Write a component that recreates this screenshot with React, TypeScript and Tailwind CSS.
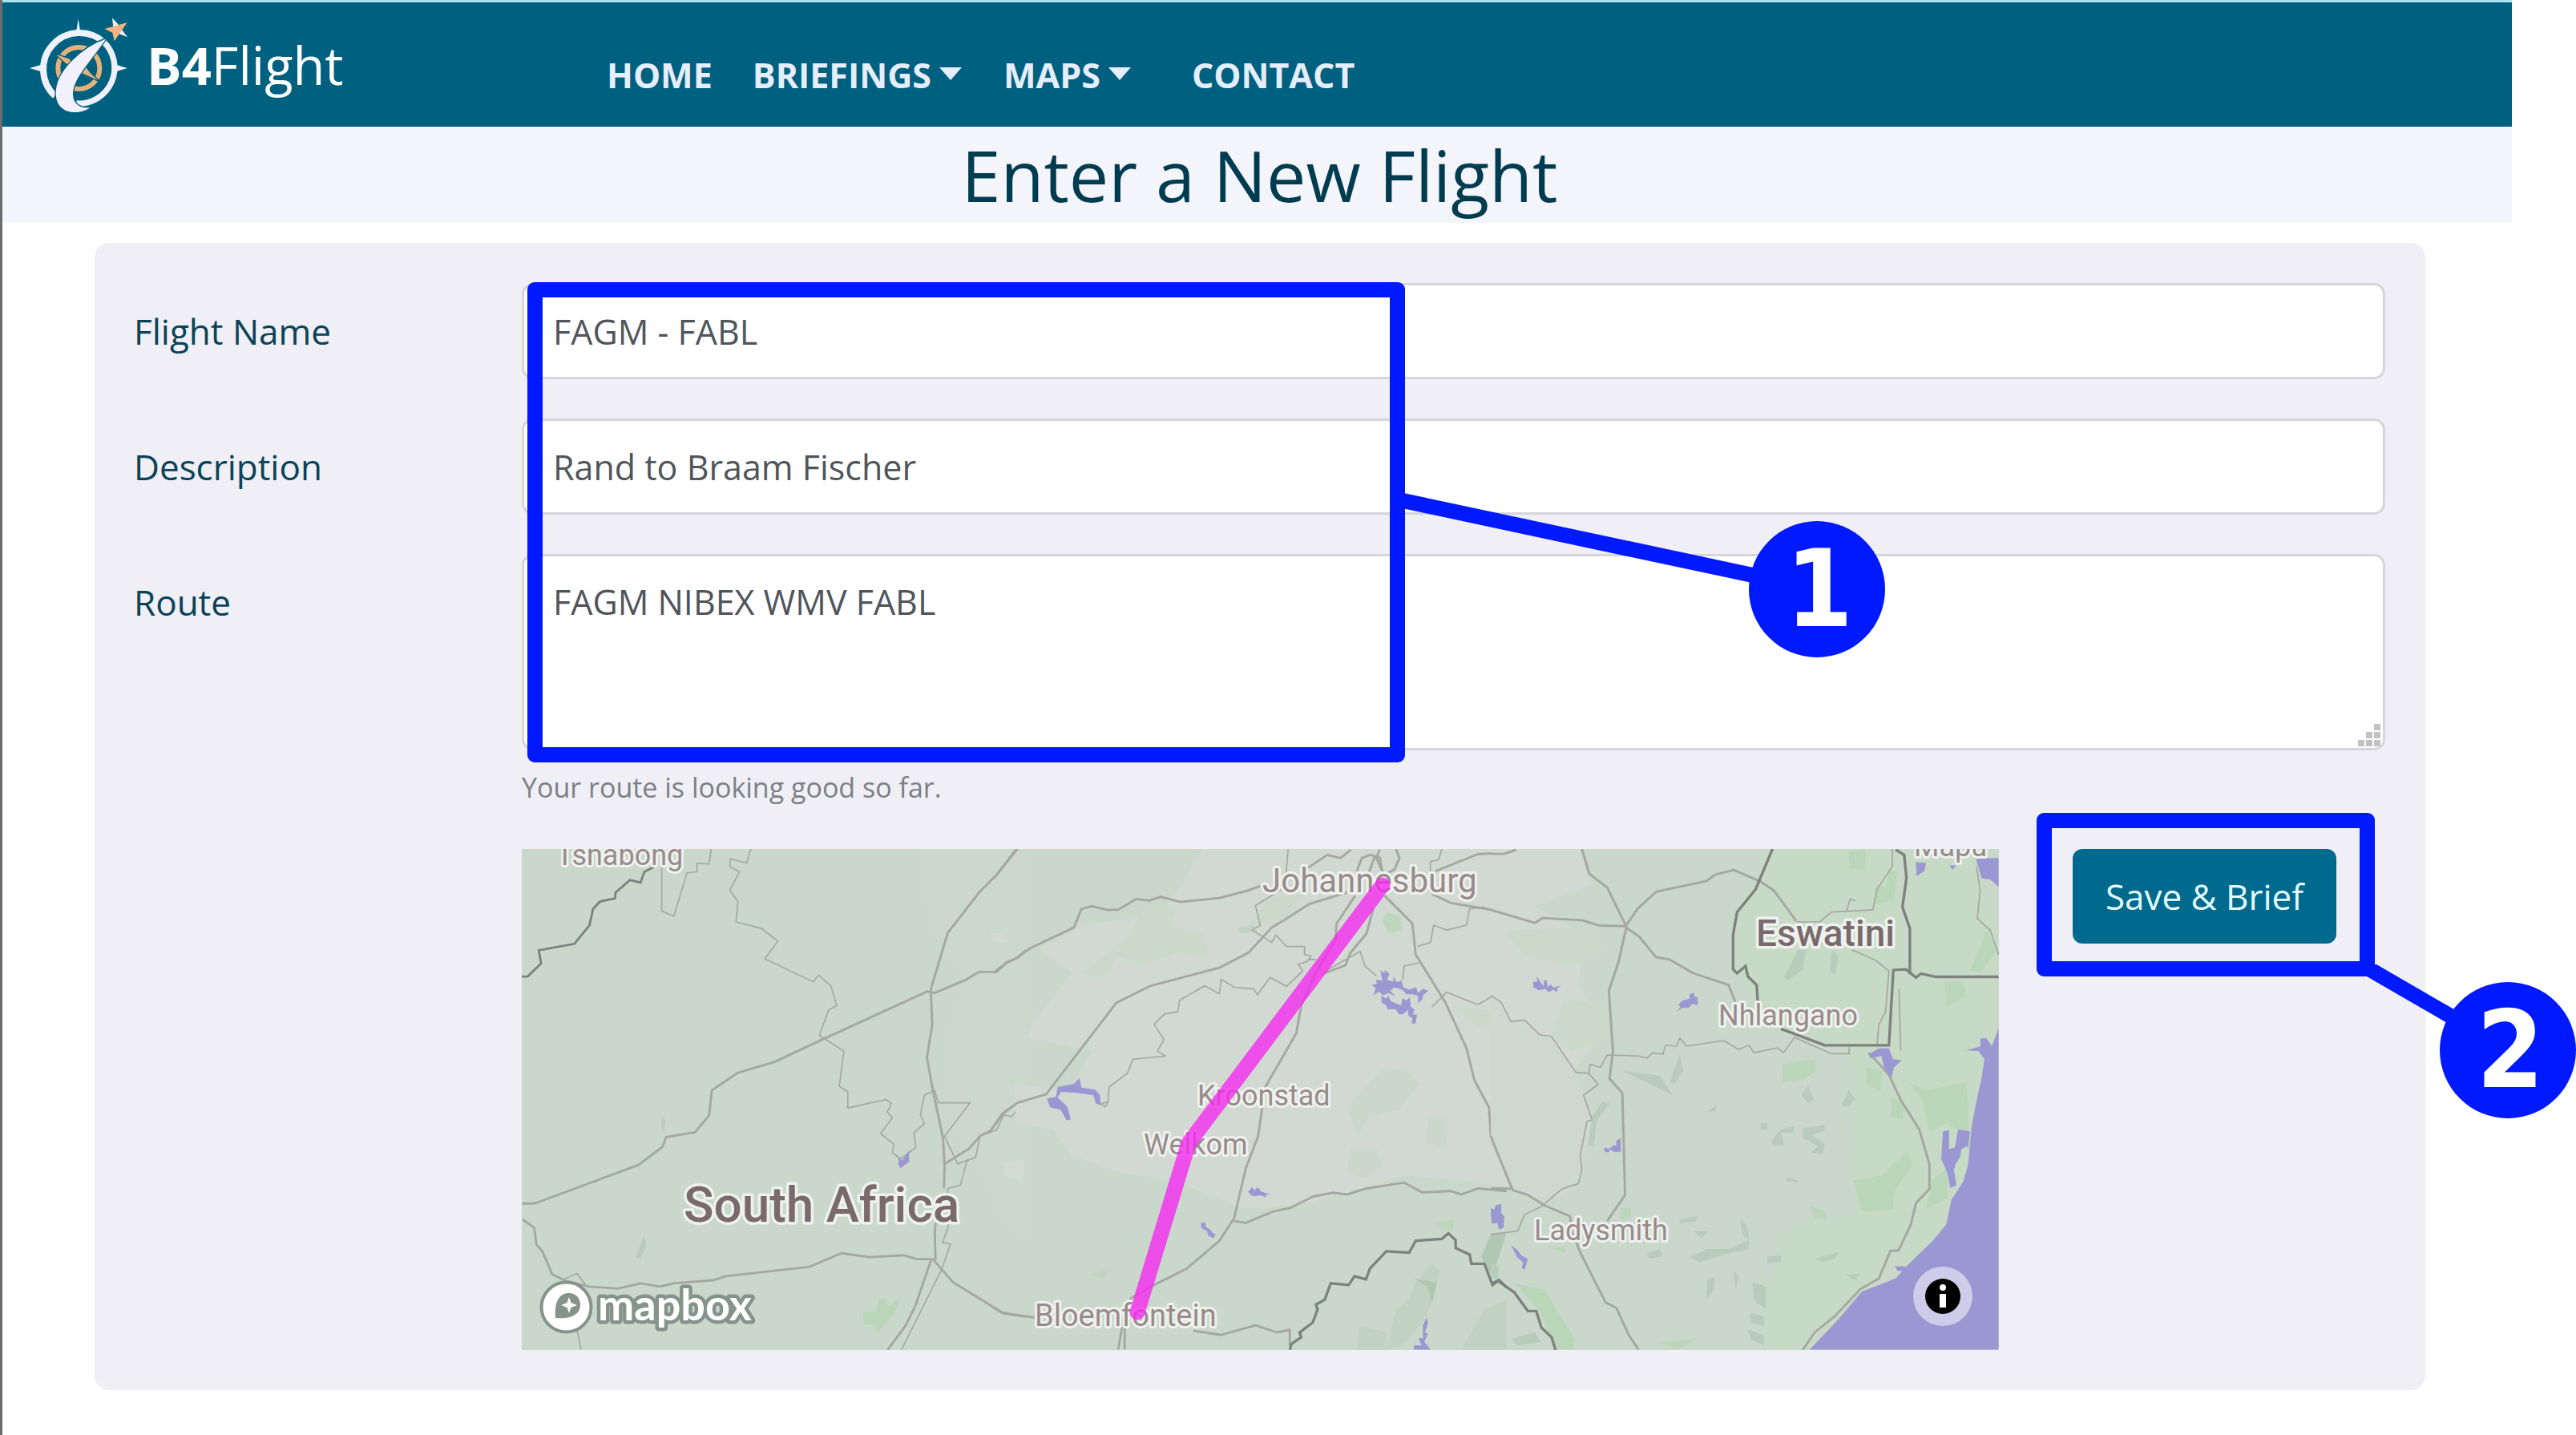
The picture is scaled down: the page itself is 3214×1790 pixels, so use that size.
import type { ReactNode } from "react";

const FONT = 'font-["Open_Sans","Noto_Sans",sans-serif]';

function Logo() {
  return (
    <svg viewBox="111 63 366 354" className="h-[118px] w-[122px]" aria-hidden="true">
      <circle cx="295" cy="252" r="78" fill="none" stroke="#e3b27c" strokeWidth="18" />
      <path d="M202 196 L262 216 L278 250 L246 236 Z" fill="#e3b27c" stroke="#00607f" strokeWidth="4" />
      <path d="M318 240 L338 268 L376 304 L302 270 Z" fill="#e3b27c" stroke="#00607f" strokeWidth="4" />
      <path d="M206 356 A134 134 0 1 1 390 156" fill="none" stroke="#eef1fc" strokeWidth="24" />
      <path d="M386 152 A134 134 0 0 1 286 384" fill="none" stroke="#eef1fc" strokeWidth="22" />
      <path d="M293 68 L300 110 H286 Z M110 252 L152 240 V264 Z M477 252 L436 240 V264 Z" fill="#eef1fc" />
      <path
        d="M402 138 C300 172 204 268 207 350 C209 398 243 422 288 419 C312 417 330 409 344 397 C305 402 277 390 275 352 C273 291 340 232 402 138 Z"
        fill="#f1f0fc"
        stroke="#00607f"
        strokeWidth="4"
      />
      <path d="M420 64 L444 90 L424 100 Z M477 136 L456 108 L442 122 Z" fill="#eef1fc" />
      <path d="M391 105 L424 96 L476 81 L456 110 L428 151 L421 119 Z" fill="#f2b483" />
    </svg>
  );
}

function Caret() {
  return (
    <svg viewBox="0 0 28 16" className="-mt-1 h-4 w-7" aria-hidden="true">
      <path d="M0 0 H28 L14 16 Z" fill="currentColor" />
    </svg>
  );
}

function Header() {
  return (
    <header className="flex h-[158px] items-center border-t-[3px] border-[#a9e3f2] bg-[#00607f] pl-[34px] text-[#e6edfc]">
      <a href="#" className="flex w-[720px] items-center gap-[24px] text-[65px] leading-[80px] text-white">
        <Logo />
        <span>
          <b>B4</b>Flight
        </span>
      </a>
      <nav className="mt-[26px] flex items-center text-[43px] leading-[60px] font-bold">
        <a href="#" className="mr-[50px]">HOME</a>
        <button type="button" className="mr-[52px] flex items-center gap-[10px]">
          BRIEFINGS <Caret />
        </button>
        <button type="button" className="mr-[76px] flex items-center gap-[10px]">
          MAPS <Caret />
        </button>
        <a href="#">CONTACT</a>
      </nav>
    </header>
  );
}

const line = "fill-none stroke-[#a5a7a1] [stroke-linejoin:round]";

function WestMap() {
  return (
    <g transform="translate(-11 -9) scale(0.408)">
      <path d="M1240 20 L1568 20 L1568 1230 L1480 1120 L1420 960 L1340 860 L1320 640 L1380 420 L1280 260 Z" fill="#ccd8cc" />
      <path d="M1460 280 l40 0 l10 30 l-40 -5 Z M1500 980 l60 -10 v70 l-60 -20 Z" fill="#d3dad2" />
      <path d="M1120 1400 L1140 1395 L1150 1420 L1185 1395 L1165 1445 L1115 1500 L1100 1475 L1075 1480 L1070 1440 L1110 1435 Z" fill="#b9d6b9" />
      <path d="M400 1205 L408 1235 L390 1272 L375 1272 Z M455 840 L466 850 L462 890 L454 870 Z" fill="#b9cbbb" />
      <g className={line} strokeWidth="4">
        <path d="M455 75 V212 L492 228 L532 95 L563 92 V66 L600 68 L606 22" />
        <path d="M660 22 M728 22 L715 65 L665 52 L663 76 L693 92 L663 148 L688 182 L682 245 L760 265 L810 304 L770 358 L918 428 L935 408 L972 440 L990 500 L965 515 L937 592 L1012 640 L998 748 L1024 764 V814 L1140 788 L1158 800 L1145 825 L1160 845 L1124 892 L1165 925 L1160 950 L1185 970 L1232 935 L1226 890 L1258 862 L1246 835 L1258 775 L1290 760 L1300 798 H1398 L1320 900 L1360 985 L1415 965 L1428 900 L1480 880 L1500 835 L1525 840 L1568 790" />
        <path d="M1390 970 L1368 1050 L1330 1060 V1180 L1314 1225 L1338 1230 L1310 1310 L1188 1553" />
        <path d="M196 1490 L208 1553 M150 1340 L196 1320 L222 1355" />
      </g>
      <g className={line} strokeWidth="7">
        <path d="M27 1106 H66 L384 988 L458 932 L468 903 L557 888 L600 836 L608 760 L688 706 L800 673 L945 605 L1266 458 L1290 462 L1385 422 L1425 398 H1478 L1510 370 L1540 356 L1568 332" />
        <path d="M1540 22 L1478 102 L1430 150 L1330 278 L1278 450 L1282 560 L1266 660 L1284 760 L1315 905 L1320 990 L1318 1060" />
        <path d="M1320 985 L1395 938 L1430 898 L1460 884 L1498 832 L1540 800 L1568 790" />
        <path d="M1293 1165 L1290 1190 L1292 1278 M30 1155 L65 1180 L72 1232 L90 1252 L120 1322 L160 1342 L232 1360 L320 1366 L390 1350 L450 1360 L490 1350 L615 1340 L650 1328 L905 1300 L1005 1258 L1090 1270 L1195 1264 L1235 1276 L1284 1276 L1345 1346 L1500 1442 L1568 1452" />
        <path d="M1278 1280 L1230 1420 L1200 1480 L1146 1553" />
      </g>
      <path d="M27 412 H45 L86 372 L79 332 L188 312 L234 255 L245 205 L266 183 L312 173 L314 155 L358 117 L390 125 L402 92 L430 78" className="fill-none stroke-[#7d827c]" strokeWidth="7" />
      <path d="M1180 965 L1190 975 L1210 945 L1212 978 L1185 998 L1178 985 Z" fill="#9a97d2" />
    </g>
  );
}

function CentralMap() {
  return (
    <g transform="translate(589 -9) scale(0.408)">
      <path d="M170 310 L260 260 L520 215 L640 20 H1600 V1060 L1480 1040 L1250 1020 L1130 1060 L930 1110 L760 1120 L560 1040 L380 1010 L240 960 L180 880 L70 860 L60 740 L230 760 L300 640 L100 600 L130 540 L240 400 L140 330 Z" fill="#d2d9d2" />
      <path d="M470 190 L560 200 L540 260 L640 280 L660 350 L560 340 L450 380 L380 350 L330 420 L270 400 L400 300 Z M780 260 L840 175 L960 150 L900 230 Z M1400 500 L1568 520 V590 L1480 570 Z" fill="#cbd9cb" />
      <path d="M1080 810 L1130 760 L1180 700 L1260 690 L1300 740 L1240 820 L1150 840 L1110 900 Z M1090 940 h80 l20 50 l-50 40 l-60 -20 Z M1330 840 h60 l-10 100 l-60 -20 Z" fill="#ccd7cc" />
      <path d="M1200 215 L1245 230 L1248 270 L1210 280 L1188 245 Z M1352 1165 L1405 1155 V1185 L1370 1190 Z" fill="#bdd6bc" />
      <path d="M745 265 l50 -10 l10 20 l-50 5 Z M295 1325 l65 -22 l-25 32 Z" fill="#bfd3c0" />
      <path d="M1290 1345 L1340 1290 L1365 1310 L1345 1400 L1310 1470 L1250 1540 L1200 1553 L1230 1430 L1270 1400 Z M1500 1430 L1568 1400 V1553 H1430 Z M1120 1480 L1200 1500 V1553 H1110 Z" fill="#c1d2c1" />
      <path d="M1285 1335 L1355 1348 L1340 1410 L1325 1360 Z M1520 1200 L1568 1195 L1525 1330 L1490 1270 Z" fill="#b0c8b2" />
      <g className={line} strokeWidth="4">
        <path d="M330 800 L350 795 L340 810 L325 800 M350 795 L352 750 L408 708 L425 665 L525 655 L500 640 L520 605 L490 558 L522 526 L562 520 L568 485 L645 440 L690 465 L695 420 L735 445 L795 450 L806 468 L845 415 L895 442 L945 395 L930 375 L960 365 L970 350 L950 345 V320 H895 L862 285 L850 308 L790 270 L815 255 L800 195 L890 140 L900 22" />
        <path d="M960 360 L985 360 M1015 395 L1120 335 L1135 380 L1170 410 M1250 420 L1255 380 L1300 370 M1295 320 L1335 308 L1345 255 L1385 270 L1445 255 L1455 205 L1500 200 M1340 505 L1385 460 L1480 498 L1520 475 L1560 490 L1568 520" />
        <path d="M1370 22 L1360 55 L1335 60 V90" />
      </g>
      <g className={line} strokeWidth="7">
        <path d="M72 22 L0 112 M0 400 L40 368 L70 356 L110 326 L245 262 L268 205 L300 197 L345 208 H380 L435 175 L475 180 L510 168 L570 184 L690 172 L775 150 L815 135 M960 80 L1020 40 L1060 50 L1092 24" />
        <path d="M0 870 L25 832 L72 798 L160 772 L375 492 L480 440 L690 385 L780 338 L850 262 L900 232 L965 190 L1080 155" />
        <path d="M1350 90 L1480 38 L1568 32 M1340 160 L1400 188 L1568 215" />
        <path d="M1105 165 L1048 250 L1045 300 L985 400 L940 500 L925 585 L830 750 L808 900 L770 1000 L735 1150 L690 1220 L590 1305 L480 1360 L420 1395 L400 1440 L380 1553 M400 1480 V1553" />
        <path d="M1160 205 L1140 280 L1090 340 L1075 378 L1010 402 M1110 90 L1125 50 L1150 40 L1180 48 L1190 100 M1165 45 L1145 100 M1180 24 L1170 50 L1185 85 M1230 22 L1240 50 L1225 85 L1205 95" />
        <path d="M1195 165 L1280 250 L1290 345 L1380 490 L1445 630 L1470 730 L1514 812 L1520 900 L1568 1025" />
        <path d="M735 1160 L770 1165 L855 1130 L905 1120 L975 1085 L1035 1073 L1080 1078 L1140 1060 L1255 1042 L1310 1072 L1395 1068 L1430 1078 L1480 1060 L1568 1068" />
        <path d="M0 1425 L25 1440 L130 1455 M610 1495 L695 1508 L800 1478 L865 1500 L905 1492 V1540" />
      </g>
      <path d="M905 1553 L910 1535 L940 1515 L935 1500 L975 1470 L990 1430 L985 1415 L1012 1400 L1030 1350 L1085 1355 L1103 1328 L1138 1338 L1150 1305 L1200 1252 L1270 1256 L1290 1220 L1370 1214 L1390 1197 L1412 1218 V1242 L1455 1262 L1460 1290 L1500 1290 L1525 1355 L1545 1340 L1568 1362" className="fill-none stroke-[#7d827c]" strokeWidth="8" />
      <g fill="#9a97d2">
        <path d="M162 785 L190 780 L195 750 L245 740 L262 722 L268 752 L310 758 L325 775 L326 805 L312 800 L305 775 L255 768 L205 765 L195 782 L225 810 L235 850 L222 852 L205 820 L172 812 Z" />
        <path d="M1182 392 L1194 402 L1196 392 L1210 405 L1202 422 L1222 428 L1222 412 L1232 430 L1246 424 L1252 445 L1270 452 L1292 445 L1296 462 L1312 450 L1328 455 L1312 470 L1310 482 L1296 494 L1298 472 L1282 466 L1262 466 L1248 452 L1225 445 L1212 455 L1228 472 L1205 462 L1190 470 L1178 458 L1160 470 L1168 448 L1156 438 L1172 434 L1168 422 L1188 424 Z" />
        <path d="M1185 470 L1200 480 L1206 470 L1214 488 L1245 500 L1250 478 L1262 485 L1272 475 L1275 505 L1286 512 L1282 528 L1294 528 L1290 555 L1278 556 L1280 540 L1268 532 L1266 514 L1250 528 L1236 526 L1230 512 L1204 512 L1200 500 L1186 492 Z" />
        <path d="M778 1070 L790 1056 L798 1066 L806 1056 L818 1070 L845 1078 L830 1080 L832 1088 L815 1080 L800 1084 L785 1080 Z M632 1165 L648 1165 L648 1178 L660 1185 L668 1195 L678 1200 L672 1212 L655 1204 L652 1190 L636 1182 Z" />
        <path d="M1520 1120 L1532 1125 L1534 1112 L1552 1108 L1552 1135 L1560 1145 L1554 1160 L1558 1180 L1545 1185 L1540 1165 L1524 1168 L1528 1145 Z" />
        <path d="M1332 1432 L1322 1455 L1328 1470 L1318 1500 L1328 1505 L1316 1528 L1335 1553 H1285 L1284 1540 L1308 1540 L1298 1518 L1312 1518 L1312 1480 Z" />
      </g>
    </g>
  );
}

function EastMap() {
  return (
    <g transform="translate(1209 -9) scale(0.421 0.408)">
      <path d="M0 20 H260 L300 130 L130 200 L280 280 L260 440 L340 560 L250 700 L300 850 L260 1040 L150 1090 L0 1050 Z" fill="#d2d9d2" />
      <path d="M40 270 L320 260 L330 330 L240 380 L100 350 Z M220 480 L350 500 V600 L240 640 L180 590 Z" fill="#cbd9cb" />
      <path d="M0 470 L60 550 L180 600 L250 700 L300 850 L260 1040 L200 1090 L60 1060 L0 920 Z" fill="#cfd8ce" />
      <path d="M400 650 H860 L1060 900 L1060 1130 L700 1100 L400 1060 Z" fill="#ccd7cc" />
      <g fill="#c7dac6">
        <path d="M840 22 H1200 L1230 400 L1190 620 L1120 640 L1200 800 L1290 950 L1300 1060 L1240 1190 L1150 1330 L940 1553 H810 V1400 L880 1180 L1080 1140 L1060 640 L860 560 L720 400 L740 200 Z" />
        <path d="M1230 30 H1440 L1505 300 V420 H1250 Z M1200 420 H1505 V580 L1460 700 L1420 900 L1400 1040 L1340 1190 L1200 1330 L1290 1060 L1180 720 Z" />
      </g>
      <g fill="#b9d6b9">
        <path d="M1060 30 L1110 22 V90 L1065 80 Z M1180 90 H1205 L1195 180 L1140 190 V130 L1170 140 Z M1470 270 L1500 330 L1450 400 L1420 395 Z M1345 430 L1400 425 L1410 470 L1350 505 Z" />
        <path d="M865 680 L960 665 L965 700 L930 725 L865 735 Z M1110 690 L1160 700 L1155 765 L1115 740 Z M1240 735 L1290 760 L1410 735 L1420 900 L1350 860 L1300 890 L1280 790 Z M1190 780 L1225 800 L1220 850 L1185 840 Z" />
        <path d="M1075 1035 L1160 1020 L1235 945 L1250 990 L1200 1060 L1190 1125 L1100 1130 Z M1310 1030 L1350 1000 L1355 1090 L1290 1120 Z M945 1110 L990 1130 L995 1155 L960 1150 Z M385 1120 H415 V1145 L385 1155 Z" />
        <path d="M70 1350 L160 1370 L200 1440 L250 1520 L240 1553 H190 L150 1440 Z M500 1530 L610 1520 L560 1550 Z M170 1240 H220 V1258 Z" />
      </g>
      <g fill="#b9cbbb">
        <path d="M910 330 H935 L925 390 L880 425 L870 415 Z M1010 330 L1030 350 L1022 405 L1005 400 Z M560 650 L570 700 L545 740 L530 735 Z M390 700 L500 715 L540 775 L470 740 Z" />
        <path d="M330 795 L352 800 L315 850 L305 930 L288 930 L300 840 Z M940 745 L958 790 L940 800 L920 775 Z M1060 760 L1080 785 L1060 810 L1040 805 Z M640 825 L670 805 L665 825 Z" />
        <path d="M830 915 L860 880 L900 870 L895 890 L860 890 L870 925 L840 930 Z M925 875 L990 865 V885 L950 895 L990 925 L985 955 L950 950 L970 930 L925 905 Z M875 1025 L910 1035 V1040 H875 Z M800 860 h20 v20 h-20 Z" />
        <path d="M590 1270 L640 1245 L710 1245 L765 1215 V1245 L690 1262 L620 1285 Z M740 1150 L760 1175 L765 1215 L745 1200 Z M460 1260 L500 1245 L510 1268 L470 1275 Z M600 1190 h45 l-20 22 Z M560 1155 l50 -10 v15 l-50 8 Z" />
        <path d="M820 1268 L860 1265 V1285 L820 1290 Z M960 1275 L1030 1255 L1020 1275 L985 1285 Z M775 1345 L815 1360 V1430 L780 1400 Z M720 1310 L735 1330 L725 1370 Z M1050 1325 L1095 1320 L1080 1340 Z M640 1340 L665 1330 L660 1370 L640 1400 Z" />
        <path d="M0 1290 L25 1300 L20 1340 L0 1330 Z M60 1520 L130 1500 L150 1530 L80 1540 Z M770 1440 l40 10 v30 l-40 -10 Z M760 1490 l50 20 v30 l-40 -20 Z" />
      </g>
      <g className={line} strokeWidth="4">
        <path d="M0 470 L30 490 L60 550 L100 545 L145 590 L180 595 L252 705 L290 708 L295 680 L325 690 L345 652 L440 655 L462 662 L480 645 L510 650 L518 622 L550 625 L560 600 L580 625 L690 608 L735 635 L765 622 L780 645 L850 630 L868 645 L900 598 L1010 648 H1062 V628" />
        <path d="M290 708 L318 742 L275 775 L300 850 L285 855 L265 960 L270 1000 L260 1045 L210 1062 L150 1115 L100 1140 L80 1190 L0 1200" />
        <path d="M1190 22 V75 L1145 145 L1132 208 L1010 215 L975 245 H905 M1055 210 L1065 175 L1080 180 M1070 330 L1140 362 L1180 395 L1170 520 L1150 560 L1145 620 M1440 75 L1450 150 L1442 235 L1480 270 L1505 345 M1210 450 L1215 640" />
      </g>
      <g className={line} strokeWidth="7">
        <path d="M0 37 H40 L75 24 M270 22 L292 98 L345 140 L402 260 L378 370 L350 455 L362 640 L352 725 L390 768 L398 1080 L345 1160" />
        <path d="M0 208 L130 248 L155 233 L270 240 L320 256 L400 258 L435 205 L490 153 L640 120 L665 100 L720 86 L800 122 L840 150 L905 242 M400 262 L440 290 L490 353 L530 360 L600 402 L705 438 L725 490" />
        <path d="M0 900 L25 965 L65 1065 L110 1080 L160 1112 L235 1145 L240 1190 L265 1255 L340 1408 L372 1425 L410 1510 L438 1553 M0 1060 H65" />
        <path d="M1120 645 L1180 712 L1215 790 L1270 880 L1300 985 V1062 L1260 1105 L1245 1170 L1208 1250 H1185 L1150 1335 L1095 1368 L1020 1450 L960 1500 L925 1553" />
      </g>
      <g className="fill-none stroke-[#7d827c]" strokeWidth="8">
        <path d="M835 22 L785 145 L730 215 L718 285 V390 L730 402 L755 380 L762 412 L788 438 L792 500 M860 572 L990 622 H1180 L1193 392 L1230 390 L1260 415 L1275 403 L1320 413 H1505" />
        <path d="M1200 24 L1225 40 L1232 110 L1220 200 L1242 265 V405 M0 1352 L20 1342 L70 1378 L110 1435 H135 L150 1485 L180 1515 L192 1553" />
      </g>
      <g fill="#9a97d2">
        <path d="M1505 570 L1485 625 L1468 600 L1450 602 L1452 625 L1408 638 L1445 640 L1463 665 L1455 720 L1440 790 L1425 870 L1415 985 L1400 1040 L1365 1095 L1350 1170 L1310 1220 L1225 1305 L1200 1335 L1100 1375 L1030 1460 L945 1553 H1505 Z" />
        <path d="M1437 50 H1505 V138 L1480 115 L1455 112 Z M1260 62 L1290 65 L1285 90 L1262 105 Z M1360 72 h20 l-12 14 Z M1198 1298 L1230 1298 V1312 H1205 Z" />
        <path d="M1120 650 L1150 632 H1180 L1192 665 L1218 668 L1195 690 L1188 720 L1165 690 L1158 655 L1125 662 Z" />
        <path d="M1340 885 L1358 882 V940 L1375 935 L1385 880 L1420 885 L1415 935 L1395 940 L1390 980 L1372 1000 L1380 1050 L1362 1058 L1352 1010 L1335 970 Z" />
        <path d="M126 428 L138 428 L136 412 L146 428 L156 442 L158 424 L166 424 L168 444 L178 436 L186 446 L208 440 L196 450 L198 460 L184 452 L172 460 L162 450 L142 454 L126 444 Z M550 522 L562 505 L556 498 L568 485 L590 480 L588 466 L602 462 L604 474 L613 475 V500 L598 496 L585 508 L566 508 Z" />
        <path d="M335 936 L352 938 L365 928 L372 930 L372 914 L385 906 V948 L366 948 L352 940 L350 950 L338 948 Z M0 1120 L12 1125 L14 1112 L30 1108 L30 1135 L40 1145 L38 1180 L24 1185 L20 1165 L2 1165 Z M60 1233 L80 1250 L92 1266 L110 1275 L100 1308 L92 1304 L96 1286 L78 1270 Z" />
      </g>
      <path d="M1413 930 L1410 990 L1395 1030 L1378 1020 L1375 990 L1392 960 L1395 940 Z" fill="#c6dcc4" />
    </g>
  );
}

function RouteMap() {
  const halo = "stroke-[#eef2ee] [paint-order:stroke] [stroke-linejoin:round]";
  return (
    <svg
      viewBox="0 0 1843 625"
      preserveAspectRatio="xMidYMid slice"
      className="block h-[625px] w-full bg-[#c9d8ca] font-[Roboto,sans-serif]"
      role="img"
      aria-label="Route map"
    >
      <WestMap />
      <CentralMap />
      <EastMap />
      <g className={halo} strokeWidth="6" fill="#998b8b">
        <g fontSize="36">
          <text x="43" y="20">Tshabong</text>
          <text x="843" y="320">Kroonstad</text>
          <text x="776" y="381">Welkom</text>
          <text x="1493" y="220">Nhlangano</text>
          <text x="1263" y="488">Ladysmith</text>
          <text x="1737" y="9">Mapu</text>
        </g>
        <text x="924" y="54" fontSize="42">Johannesburg</text>
        <text x="640" y="595" fontSize="38">Bloemfontein</text>
      </g>
      <g className={halo} strokeWidth="7" fill="#7b6a6c" fontWeight="500">
        <text x="202" y="465" fontSize="62">South Africa</text>
        <text x="1540" y="121" fontSize="46">Eswatini</text>
      </g>
      <path d="M1074 45 L832 367 L768 578" fill="none" stroke="#f52bef" strokeOpacity="0.8" strokeWidth="19" strokeLinecap="round" strokeLinejoin="round" />
      <circle cx="55.500" cy="571.500" r="31" fill="#fff" stroke="#84948a" strokeWidth="4" />
      <path d="M42 585 C40 560 50 554 59 554 C68 554 73 561 73 569 C73 580 62 587 42 585 Z" fill="#84948a" />
      <path d="M59 559 L61.500 566 L69 569 L61.500 572 L59 579 L56.500 572 L49 569 L56.500 566 Z" fill="#fff" />
      <text x="95" y="588" fontSize="54" fontWeight="700" fill="#fff" className="font-[Lato,sans-serif] stroke-[#84948a] [paint-order:stroke] [stroke-linejoin:round]" strokeWidth="9">
        mapbox
      </text>
    </svg>
  );
}

function ResizeGrip() {
  return (
    <svg viewBox="0 0 28 28" className="pointer-events-none absolute right-[6px] bottom-[5px] h-[28px] w-[28px]" aria-hidden="true">
      <path d="M20 0h8v8h-8Z M10 10h8v8h-8Z M20 10h8v8h-8Z M0 20h8v8h-8Z M10 20h8v8h-8Z M20 20h8v8h-8Z" fill="#c2c2c2" />
    </svg>
  );
}

function Row({ id, label, children }: { id: string; label: string; children: ReactNode }) {
  return (
    <div className="flex items-start">
      <label htmlFor={id} className="w-[484px] shrink-0 text-[44px] leading-[120px] text-[#0a4257]">
        {label}
      </label>
      <div className="relative min-w-0 flex-1">{children}</div>
    </div>
  );
}

const field =
  "block w-full rounded-[14px] border-[3px] border-[#d5d5db] bg-white px-[36px] text-[43px] text-[#50555b] outline-none";

function Badge({ n, className }: { n: number; className: string }) {
  return (
    <div
      className={`absolute flex h-[170px] w-[170px] items-center justify-center rounded-full bg-[#0019ff] pl-[6px] font-["DejaVu_Sans_Condensed","DejaVu_Sans",sans-serif] text-[134px] leading-[170px] font-bold text-white ${className}`}
    >
      {n}
    </div>
  );
}

export default function App() {
  return (
    <div className={`min-h-screen overflow-x-hidden border-l-[3px] border-[#6c6c6c] bg-white ${FONT}`}>
      <div className="mr-[80px]">
        <Header />
        <h1 className="bg-[#f4f4fb] pl-[6px] text-center text-[88px] leading-[120px] text-[#003c50]">Enter a New Flight</h1>
        <form className="mt-[25px] mr-[108px] ml-[115px] rounded-[18px] bg-[#f0eff6] p-[50px] pl-[49px]">
          <div className="relative flex flex-col gap-[49px]">
            <Row id="name" label="Flight Name">
              <input id="name" defaultValue="FAGM - FABL" className={`${field} h-[120px]`} />
            </Row>
            <Row id="description" label="Description">
              <input id="description" defaultValue="Rand to Braam Fischer" className={`${field} h-[120px]`} />
            </Row>
            <Row id="route" label="Route">
              <textarea id="route" defaultValue="FAGM NIBEX WMV FABL" className={`${field} h-[245px] resize-none py-[27px] leading-[60px]`} />
              <ResizeGrip />
            </Row>
            <div className="pointer-events-none absolute top-[-1px] left-[491px] h-[599px] w-[1095px] rounded-[9px] border-[19px] border-[#0019ff]">
              <svg viewBox="0 0 460 120" className="absolute top-[253px] left-[1062px] h-[120px] w-[460px] overflow-visible" aria-hidden="true">
                <path d="M9 0 L455 95" stroke="#0019ff" strokeWidth="19" />
              </svg>
              <Badge n={1} className="top-[279px] left-[1505px]" />
            </div>
          </div>
          <div className="pl-[484px]">
            <p className="mt-[16px] mb-[47px] text-[34px] leading-[60px] text-[#7b8087]">Your route is looking good so far.</p>
            <div className="flex items-start">
              <div className="relative min-w-0 flex-1">
                <RouteMap />
                <button type="button" aria-label="Map information" className="absolute right-[33px] bottom-[30px] flex h-[74px] w-[74px] items-center justify-center rounded-full bg-[#cfcce9]">
                  <svg viewBox="0 0 44 44" className="h-[44px] w-[44px]" aria-hidden="true">
                    <circle cx="22" cy="22" r="22" fill="#000" />
                    <circle cx="22" cy="11" r="4" fill="#fff" />
                    <path d="M18 19h8v17h-8Z" fill="#fff" />
                  </svg>
                </button>
              </div>
              <div className="relative mr-[61px] ml-[92px]">
                <button type="submit" className="h-[118px] w-[329px] rounded-[12px] bg-[#006a8e] text-[44px] text-[#e2fbff]">
                  Save &amp; Brief
                </button>
                <div className="pointer-events-none absolute top-[-45px] left-[-45px] h-[204px] w-[422px] rounded-[9px] border-[19px] border-[#0019ff]">
                  <svg viewBox="0 0 130 90" className="absolute top-[170px] left-[385px] h-[90px] w-[130px]" aria-hidden="true">
                    <path d="M8 4 L122 70" stroke="#0019ff" strokeWidth="19" />
                  </svg>
                  <Badge n={2} className="top-[192px] left-[484px]" />
                </div>
              </div>
            </div>
          </div>
        </form>
      </div>
    </div>
  );
}
